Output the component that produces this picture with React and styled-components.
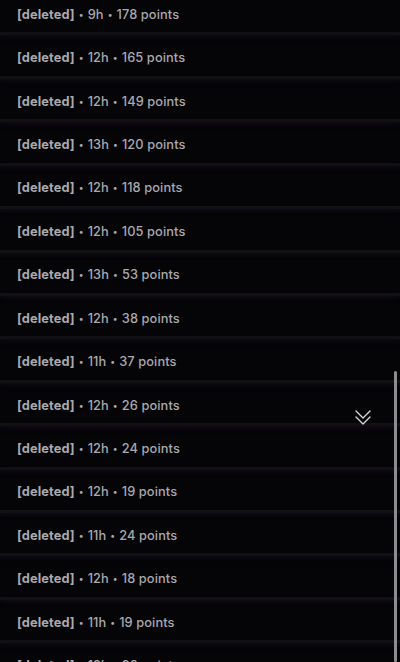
import React from 'react';
import styled, { createGlobalStyle } from 'styled-components';

const Global = createGlobalStyle`
    html, body {
        margin: 0;
        padding: 0;
        background: #050407;
        overflow: hidden;
    }
`;

const Screen = styled.div`
    position: relative;
    width: 400px;
    height: 662px;
    overflow: hidden;
    background: #050407;
    font-family: Inter, 'Liberation Sans', sans-serif;
`;

const List = styled.div`
    display: flex;
    flex-direction: column;
    margin-top: -8px;
`;

const Row = styled.div`
    height: 43.43px;
    box-sizing: border-box;
    display: flex;
    align-items: center;
    padding: 4px 17px 0;
    border-bottom: 3px solid #121114;
    box-shadow: 0 2px 5px rgba(30, 28, 34, 0.4);
`;

const Meta = styled.span`
    font-size: 12.8px;
    font-weight: 500;
    color: #a9a8ad;
    letter-spacing: 0.1px;
`;

const Author = styled.span`
    font-weight: 700;
`;

const Dot = styled.span`
    font-size: 9px;
    margin: 0 4px;
    vertical-align: 1px;
`;

const Scrollbar = styled.div`
    position: absolute;
    right: 3px;
    top: 371px;
    bottom: 0;
    width: 3px;
    border-radius: 2px;
    background: #8d8c91;
`;

const JumpDown = styled.div`
    position: absolute;
    left: 352px;
    top: 407px;
    width: 22px;
    height: 22px;
    display: flex;
    align-items: center;
    justify-content: center;
`;

const rows = [
    ['9h', 178], ['12h', 165], ['12h', 149], ['13h', 120], ['12h', 118],
    ['12h', 105], ['13h', 53], ['12h', 38], ['11h', 37], ['12h', 26],
    ['12h', 24], ['12h', 19], ['11h', 24], ['12h', 18], ['11h', 19],
    ['12h', 20],
];

export default function App() {
    return (
        <Screen>
            <Global />
            <List>
                {rows.map(([age, points], i) => (
                    <Row key={i}>
                        <Meta>
                            <Author>[deleted]</Author>
                            <Dot>•</Dot>{age}<Dot>•</Dot>{points} points
                        </Meta>
                    </Row>
                ))}
            </List>
            <JumpDown>
                <svg width="20" height="20" viewBox="0 0 20 20" fill="none" stroke="#d6d5da" strokeWidth="1.4" strokeLinecap="round" strokeLinejoin="round">
                    <polyline points="3,3 10,10 17,3" />
                    <polyline points="3,9 10,16 17,9" />
                </svg>
            </JumpDown>
            <Scrollbar />
        </Screen>
    );
}
